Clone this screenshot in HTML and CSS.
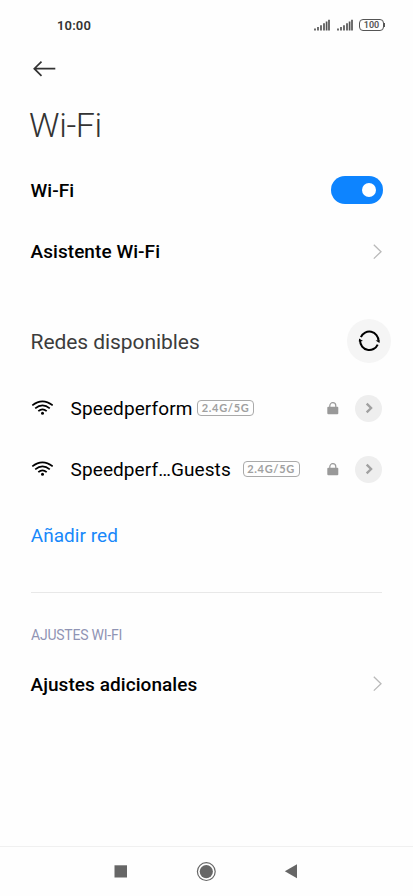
FILE: index.html
```html
<!DOCTYPE html>
<html lang="es">
<head>
<meta charset="utf-8">
<title>Wi-Fi</title>
<link rel="stylesheet" href="styles.css">
</head>
<body>
<svg width="0" height="0" class="defs">
  <symbol id="signal" viewBox="0 0 16 12"><path d="M1 9.5v2M4 8v3.5M7 6.2v5.3M10 4.3v7.2M12.6 2.4v9.1M15 .7v10.8" fill="none" stroke="#555" stroke-width="1.7"/></symbol>
  <symbol id="chevron" viewBox="0 0 10 16"><path d="M1.8 .8L9 7.7l-7.2 6.9" fill="none" stroke="#b9b9b9" stroke-width="1.3"/></symbol>
  <symbol id="wifi" viewBox="0 0 22 16"><g fill="none" stroke="#000" stroke-width="1.7"><path d="M1.3 5.4Q11.5-2.6 21.7 5.4"/><path d="M4.2 8.3Q11.5 2.3 18.8 8.3"/><path d="M7.3 11.2Q11.5 7.4 15.7 11.2"/></g><circle cx="11.5" cy="13.3" r="1.5"/></symbol>
  <symbol id="lock" viewBox="0 0 12 13"><rect x=".3" y="4.7" width="11" height="7.5" rx="1" fill="#999"/><path d="M2.8 5.5V3.7a3 3 0 0 1 6 0v1.8" fill="none" stroke="#999" stroke-width="1.2"/></symbol>
  <symbol id="arrow" viewBox="0 0 8 12"><path d="M1.7 1.6L6.1 6l-4.4 4.4" fill="none" stroke="#a0a0a0" stroke-width="2.3"/></symbol>
</svg>
<div class="screen">
  <header class="status">
    <span class="time">10:00</span>
    <div class="indicators">
      <svg class="signal"><use href="#signal"/></svg>
      <svg class="signal"><use href="#signal"/></svg>
      <div class="battery"><span>100</span></div><i class="battery-tip"></i>
    </div>
  </header>
  <nav class="back">
    <svg width="24" height="18" viewBox="0 0 24 18"><path d="M23.3 8.7H2.3M9.5 1.6L2.3 8.7l7.2 7.1" fill="none" stroke="#333" stroke-width="1.7"/></svg>
  </nav>
  <h1 class="title">Wi-Fi</h1>
  <main>
    <div class="row row-toggle"><span class="strong">Wi-Fi</span><div class="switch"><i></i></div></div>
    <div class="row row-assistant"><span class="strong">Asistente Wi-Fi</span><svg class="chevron"><use href="#chevron"/></svg></div>
    <div class="row row-available">
      <h2>Redes disponibles</h2>
      <div class="refresh"><svg width="22" height="22" viewBox="0 0 22 22"><g fill="none" stroke="#000" stroke-width="2"><path d="M2.9 7.05A9.2 9.2 0 0 1 20.5 10.8"/><path d="M19.7 14.55A9.2 9.2 0 0 1 2.1 10.8"/></g><path d="M17.6 10.6l4.2-.4-.3 2.8zM5 11l-4.2.4.3-2.8z"/></svg></div>
    </div>
    <div class="row network network-main">
      <svg class="wifi"><use href="#wifi"/></svg><span class="name">Speedperform</span><span class="band">2.4G/5G</span>
      <svg class="lock"><use href="#lock"/></svg><div class="go"><svg><use href="#arrow"/></svg></div>
    </div>
    <div class="row network network-guest">
      <svg class="wifi"><use href="#wifi"/></svg><span class="name">Speedperf…Guests</span><span class="band">2.4G/5G</span>
      <svg class="lock"><use href="#lock"/></svg><div class="go"><svg><use href="#arrow"/></svg></div>
    </div>
    <div class="row row-add"><span class="add">Añadir red</span></div>
    <hr>
    <h3>AJUSTES WI-FI</h3>
    <div class="row row-more"><span class="strong more">Ajustes adicionales</span><svg class="chevron"><use href="#chevron"/></svg></div>
  </main>
  <footer class="navbar">
    <svg width="14" height="14"><rect x=".5" y=".3" width="12.5" height="12.2" fill="#666"/></svg>
    <svg width="20" height="20"><circle cx="10.3" cy="9.6" r="8.9" fill="none" stroke="#666" stroke-width="1.2"/><circle cx="10.3" cy="9.6" r="6.6" fill="#666"/></svg>
    <svg width="14" height="16"><path d="M.8 7.3L13 .3v14z" fill="#666"/></svg>
  </footer>
</div>
</body>
</html>
```
FILE: styles.css
```css
* { box-sizing: border-box; }
body { margin: 0; background: #fefefe; font-family: Roboto, "Liberation Sans", sans-serif; color: #000; }
svg { display: block; flex: none; }
.defs { position: absolute; }
.screen { width: 413px; height: 896px; display: flex; flex-direction: column; overflow: hidden; }
.status { height: 50px; padding: 0 28px 0 57px; display: flex; align-items: center; justify-content: space-between; }
.time { font-size: 13px; font-weight: 600; letter-spacing: .15px; color: #333; }
.indicators { display: flex; align-items: center; }
.signal { width: 16px; height: 12px; margin-right: 7px; }
.battery { width: 25px; height: 12px; margin-left: -1px; border: 1.5px solid #555; border-radius: 4px; display: flex; align-items: center; justify-content: center; font-size: 9px; line-height: 9px; font-weight: 600; color: #555; }
.battery-tip { width: 1px; height: 4px; background: #555; }
.back { height: 37px; padding: 10px 0 0 32px; }
.title { margin: 0; height: 78px; padding-left: 29px; font-size: 34px; line-height: 77px; font-weight: 300; letter-spacing: -.35px; color: #333; }
main { flex: 1; padding: 0 31px; }
.row { display: flex; align-items: center; justify-content: space-between; }
.strong { font-size: 19px; font-weight: 500; margin-left: -.5px; letter-spacing: .06px; }
.row-toggle { height: 50px; }
.switch { width: 52px; height: 28px; margin-right: -.5px; border-radius: 14px; background: #0d84ff; display: flex; align-items: center; justify-content: flex-end; padding-right: 7px; }
.switch i { width: 14px; height: 14px; border-radius: 50%; background: #fff; }
.row-assistant { height: 73px; }
.chevron { width: 10px; height: 16px; }
.row-available { height: 90px; padding-top: 16px; }
h2 { margin: 2px 0 0 -.5px; font-size: 21px; font-weight: 400; letter-spacing: -.06px; color: #3c3c3c; }
.refresh { width: 44px; height: 44px; margin-right: -9px; border-radius: 50%; background: #f5f5f5; display: flex; align-items: center; justify-content: center; }
.network { height: 60px; justify-content: flex-start; }
.network-guest { height: 62px; }
.wifi { width: 22px; height: 16px; margin-right: 17.6px; }
.name { width: 122px; font-size: 19px; letter-spacing: .1px; white-space: nowrap; }
.band { width: 57px; height: 16px; margin-left: 4.5px; border: 1px solid #aaa; border-radius: 4px; font: 700 11px/14px Lato, sans-serif; letter-spacing: .7px; color: #a0a0a0; text-align: center; }
.network-guest .name { width: 161px; letter-spacing: .09px; }
.network-guest .band { margin-left: 11px; }
.lock { width: 12px; height: 13px; margin-left: auto; margin-right: 16px; }
.go { width: 27px; height: 27px; border-radius: 50%; background: #eee; display: flex; align-items: center; justify-content: center; }
.go svg { width: 8px; height: 12px; }
.row-add { height: 70px; }
.add { font-size: 19px; color: #1788fa; margin-left: -.3px; letter-spacing: .05px; }
hr { height: 1px; margin: 22px 0 32px; border: 0; background: #e8e8e8; }
h3 { margin: 0; font-size: 14px; line-height: 20px; font-weight: 400; letter-spacing: -.22px; color: #9094b4; }
.row-more { height: 78px; }
.navbar { height: 50px; border-top: 1px solid #f0f0f0; padding: 0 115px 0 114px; display: flex; align-items: center; justify-content: space-between; }
```
